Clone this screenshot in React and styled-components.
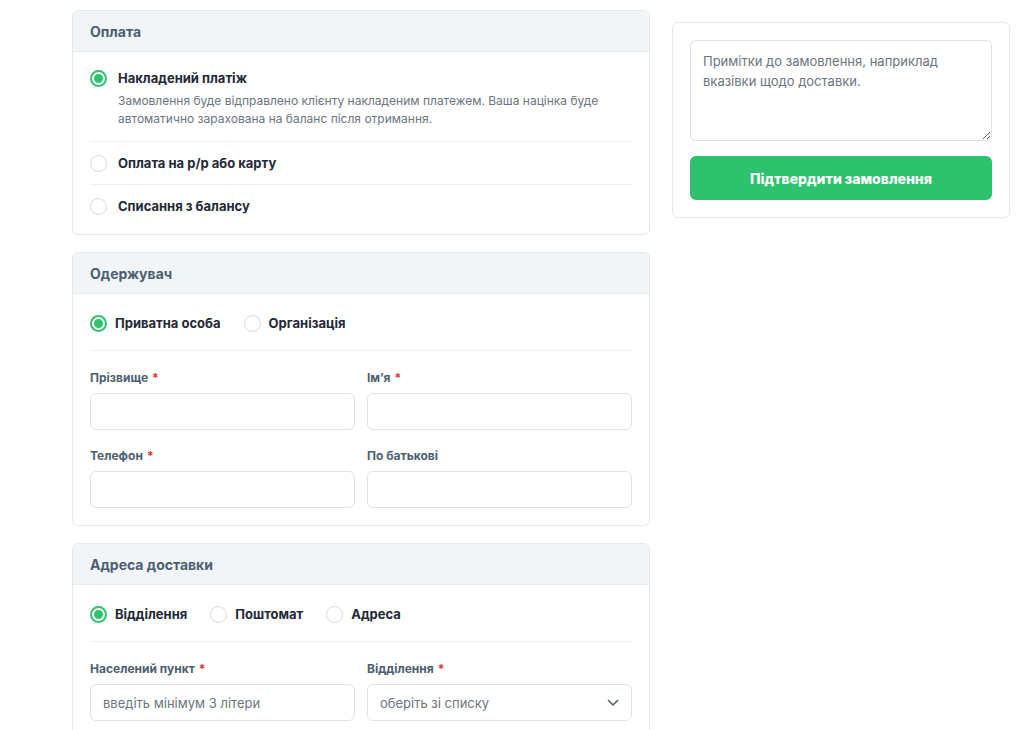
import styled, { createGlobalStyle } from 'styled-components';

const GlobalStyle = createGlobalStyle`
    body {
        margin: 0;
        background: #fff;
        font-family: Inter, "Noto Sans", sans-serif;
        color: #1f2937;
    }
    * { box-sizing: border-box; }
`

const Page = styled.div`
    display: flex;
    align-items: flex-start;
    gap: 22px;
    padding: 10px 0 0 72px;
`

const MainColumn = styled.div`
    width: 578px;
    display: flex;
    flex-direction: column;
    gap: 17px;
`

const Card = styled.section`
    background: #fff;
    border: 1px solid #e3e8ed;
    border-radius: 6px;
    overflow: hidden;
`

const CardHeader = styled.div`
    height: 41px;
    display: flex;
    align-items: center;
    padding: 0 17px;
    background: #f1f5f8;
    border-bottom: 1px solid #e6ebf0;
    font-size: 14px;
    font-weight: 700;
    color: #4b5f70;
`

const CardBody = styled.div`
    padding: ${p => p.$pad || '5px 17px 7px'};
`

const OptionRow = styled.div`
    padding: 11px 0;
    &:first-child { padding-bottom: 13px; }
    & + & { border-top: 1px solid #edf0f3; }
`

const RadioLine = styled.label`
    display: flex;
    align-items: center;
    gap: ${p => (p.$tight ? '8px' : '11px')};
    font-size: 13px;
    font-weight: 700;
    line-height: 20px;
    color: #1f2937;
    cursor: pointer;
`

const RadioMark = styled.span`
    width: 17px;
    height: 17px;
    flex: none;
    border-radius: 50%;
    border: ${p => (p.$checked ? '2px solid #2ec26e' : '1.5px solid #d3dae1')};
    display: flex;
    align-items: center;
    justify-content: center;
    &::after {
        content: '';
        width: 9px;
        height: 9px;
        border-radius: 50%;
        background: #2ec26e;
        display: ${p => (p.$checked ? 'block' : 'none')};
    }
`

const Hint = styled.p`
    margin: 4px 0 0 28px;
    font-size: 12px;
    line-height: 18px;
    color: #6b7580;
`

const InlineRadios = styled.div`
    display: flex;
    align-items: center;
    gap: 23px;
    padding: 19px 0 17px;
    border-bottom: 1px solid #edf0f3;
`

const FieldGrid = styled.div`
    display: grid;
    grid-template-columns: 1fr 1fr;
    column-gap: 12px;
    row-gap: 18px;
    padding-top: 19px;
`

const Field = styled.div`
    display: flex;
    flex-direction: column;
    gap: 7px;
`

const Label = styled.div`
    font-size: 12px;
    font-weight: 700;
    line-height: 16px;
    color: #4b5f70;
    span { color: #e0312f; margin-left: 4px; }
`

const Input = styled.input`
    height: 37px;
    width: 100%;
    border: 1px solid #dde3e9;
    border-radius: 6px;
    padding: 0 12px;
    font-family: inherit;
    font-size: 13px;
    color: #1f2937;
    outline: none;
    &::placeholder { color: #6b7580; }
`

const SelectBox = styled.div`
    height: 37px;
    border: 1px solid #dde3e9;
    border-radius: 6px;
    padding: 0 12px;
    display: flex;
    align-items: center;
    justify-content: space-between;
    font-size: 13px;
    color: #6b7580;
`

const Side = styled.aside`
    width: 338px;
    margin-top: 12px;
    border: 1px solid #e3e8ed;
    border-radius: 6px;
    padding: 17px;
    display: flex;
    flex-direction: column;
    gap: 15px;
`

const Notes = styled.textarea`
    height: 101px;
    width: 100%;
    border: 1px solid #dde3e9;
    border-radius: 6px;
    padding: 10px 12px;
    font-family: inherit;
    font-size: 13px;
    line-height: 20px;
    resize: vertical;
    outline: none;
    &::placeholder { color: #6b7580; }
`

const SubmitButton = styled.button`
    height: 44px;
    border: none;
    border-radius: 6px;
    background: #2ec26e;
    color: #fff;
    font-family: inherit;
    font-size: 14px;
    font-weight: 800;
    cursor: pointer;
`

const Radio = ({ checked, tight, children }) => (
    <RadioLine $tight={tight}>
        <RadioMark $checked={checked} />
        {children}
    </RadioLine>
)

const Chevron = () => (
    <svg width="12" height="8" viewBox="0 0 12 8" fill="none">
        <path d="M1.5 1.5L6 6l4.5-4.5" stroke="#4b5f70" strokeWidth="1.6" strokeLinecap="round" strokeLinejoin="round" />
    </svg>
)

const App = () => {
    return (
        <>
            <GlobalStyle />
            <Page>
                <MainColumn>
                    <Card>
                        <CardHeader>Оплата</CardHeader>
                        <CardBody>
                            <OptionRow>
                                <Radio checked>Накладений платіж</Radio>
                                <Hint>
                                    Замовлення буде відправлено клієнту накладеним платежем. Ваша націнка буде
                                    автоматично зарахована на баланс після отримання.
                                </Hint>
                            </OptionRow>
                            <OptionRow>
                                <Radio>Оплата на р/р або карту</Radio>
                            </OptionRow>
                            <OptionRow>
                                <Radio>Списання з балансу</Radio>
                            </OptionRow>
                        </CardBody>
                    </Card>

                    <Card>
                        <CardHeader>Одержувач</CardHeader>
                        <CardBody $pad="0 17px 17px">
                            <InlineRadios>
                                <Radio checked tight>Приватна особа</Radio>
                                <Radio tight>Організація</Radio>
                            </InlineRadios>
                            <FieldGrid>
                                <Field>
                                    <Label>Прізвище<span>*</span></Label>
                                    <Input />
                                </Field>
                                <Field>
                                    <Label>Імʼя<span>*</span></Label>
                                    <Input />
                                </Field>
                                <Field>
                                    <Label>Телефон<span>*</span></Label>
                                    <Input />
                                </Field>
                                <Field>
                                    <Label>По батькові</Label>
                                    <Input />
                                </Field>
                            </FieldGrid>
                        </CardBody>
                    </Card>

                    <Card>
                        <CardHeader>Адреса доставки</CardHeader>
                        <CardBody $pad="0 17px 17px">
                            <InlineRadios>
                                <Radio checked tight>Відділення</Radio>
                                <Radio tight>Поштомат</Radio>
                                <Radio tight>Адреса</Radio>
                            </InlineRadios>
                            <FieldGrid>
                                <Field>
                                    <Label>Населений пункт<span>*</span></Label>
                                    <Input placeholder="введіть мінімум 3 літери" />
                                </Field>
                                <Field>
                                    <Label>Відділення<span>*</span></Label>
                                    <SelectBox>
                                        оберіть зі списку
                                        <Chevron />
                                    </SelectBox>
                                </Field>
                            </FieldGrid>
                        </CardBody>
                    </Card>
                </MainColumn>

                <Side>
                    <Notes placeholder="Примітки до замовлення, наприклад вказівки щодо доставки." />
                    <SubmitButton>Підтвердити замовлення</SubmitButton>
                </Side>
            </Page>
        </>
    )
}

export default App;
